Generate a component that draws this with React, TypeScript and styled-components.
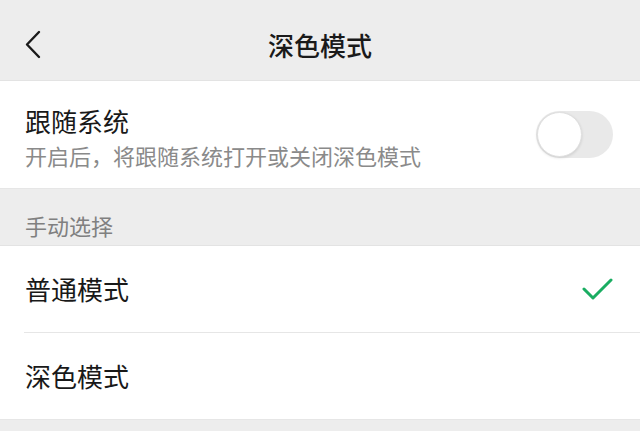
import styled, { createGlobalStyle } from "styled-components";

const GlobalStyle = createGlobalStyle`
  body {
    margin: 0;
    background: #ededed;
    font-family: "Noto Sans CJK SC", "Noto Sans", sans-serif;
    color: #191919;
  }
`;

const Page = styled.div`
  width: 640px;
  min-height: 431px;
  background: #ededed;
`;

const Header = styled.div`
  position: relative;
  height: 80px;
  display: flex;
  align-items: center;
  justify-content: center;
  border-bottom: 1px solid #e3e3e3;
`;

const BackButton = styled.div`
  position: absolute;
  left: 22px;
  top: 28px;
  width: 24px;
  height: 34px;
`;

const Title = styled.h1`
  margin: 0;
  padding-top: 10px;
  font-size: 26px;
  font-weight: 500;
  line-height: 30px;
  color: #1a1a1a;
`;

const Card = styled.div`
  background: #fff;
  border-bottom: 1px solid #e6e6e6;
`;

const FollowRow = styled.div`
  height: 107px;
  display: flex;
  align-items: center;
  justify-content: space-between;
  padding: 0 27px 0 25px;
`;

const TextCol = styled.div`
  display: flex;
  flex-direction: column;
  gap: 6px;
  padding-top: 4px;
`;

const RowTitle = styled.div`
  font-size: 26px;
  line-height: 30px;
  color: #191919;
`;

const SubText = styled.div`
  font-size: 22px;
  line-height: 26px;
  color: #8a8a8a;
`;

const Switch = styled.div<{ on?: boolean }>`
  position: relative;
  width: 77px;
  height: 47px;
  border-radius: 24px;
  background: ${(p) => (p.on ? "#07c160" : "#e9e9e9")};
`;

const Knob = styled.div<{ on?: boolean }>`
  position: absolute;
  top: 1px;
  left: ${(p) => (p.on ? "31px" : "1px")};
  width: 45px;
  height: 45px;
  box-sizing: border-box;
  border-radius: 50%;
  background: #fff;
  border: 1px solid #e0e0e0;
  box-shadow: 0 1px 3px rgba(0, 0, 0, 0.12);
`;

const SectionLabel = styled.div`
  height: 57px;
  display: flex;
  align-items: flex-end;
  padding: 0 0 9px 25px;
  box-sizing: border-box;
  font-size: 22px;
  line-height: 22px;
  color: #808080;
  border-bottom: 1px solid #e3e3e3;
`;

const Group = styled.div`
  background: #fff;
  border-bottom: 1px solid #e6e6e6;
`;

const OptionRow = styled.div<{ divided?: boolean }>`
  height: 86px;
  margin-left: 24px;
  padding-right: 27px;
  display: flex;
  align-items: center;
  justify-content: space-between;
  border-bottom: ${(p) => (p.divided ? "1px solid #e6e6e6" : "none")};
`;

const OptionText = styled.div`
  padding-left: 1px;
  font-size: 26px;
  line-height: 30px;
  color: #191919;
`;

const Chevron = () => (
  <svg width="24" height="34" viewBox="0 0 24 34">
    <polyline
      points="17,4 5,16.5 17,29"
      fill="none"
      stroke="#1a1a1a"
      strokeWidth="2.4"
      strokeLinecap="round"
      strokeLinejoin="round"
    />
  </svg>
);

const Check = () => (
  <svg width="31" height="24" viewBox="0 0 31 24">
    <polyline
      points="2,12 11,21 29,3"
      fill="none"
      stroke="#1aad62"
      strokeWidth="3"
      strokeLinecap="round"
      strokeLinejoin="round"
    />
  </svg>
);

const options = [
  { label: "普通模式", checked: true },
  { label: "深色模式", checked: false },
];

const App = () => {
  return (
    <Page>
      <GlobalStyle />
      <Header>
        <BackButton>
          <Chevron />
        </BackButton>
        <Title>深色模式</Title>
      </Header>
      <Card>
        <FollowRow>
          <TextCol>
            <RowTitle>跟随系统</RowTitle>
            <SubText>开启后，将跟随系统打开或关闭深色模式</SubText>
          </TextCol>
          <Switch>
            <Knob />
          </Switch>
        </FollowRow>
      </Card>
      <SectionLabel>手动选择</SectionLabel>
      <Group>
        {options.map((o, i) => (
          <OptionRow key={o.label} divided={i < options.length - 1}>
            <OptionText>{o.label}</OptionText>
            {o.checked && <Check />}
          </OptionRow>
        ))}
      </Group>
    </Page>
  );
};

export default App;
